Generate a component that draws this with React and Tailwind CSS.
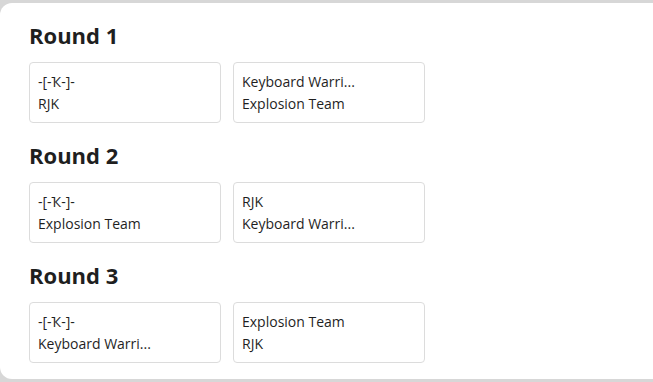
const rounds = [
  { name: "Round 1", matches: [["-[-Ҡ-]-", "RJK"], ["Keyboard Warri...", "Explosion Team"]] },
  { name: "Round 2", matches: [["-[-Ҡ-]-", "Explosion Team"], ["RJK", "Keyboard Warri..."]] },
  { name: "Round 3", matches: [["-[-Ҡ-]-", "Keyboard Warri..."], ["Explosion Team", "RJK"]] },
];

function MatchCard({ teams }) {
  return (
    <div className="w-[192px] rounded-[4px] border border-[#dcdcdc] bg-white px-[8px] pt-[8px] pb-[7px] text-[14px] leading-[22px] text-[#1f1f1f]">
      {teams.map((t, i) => (
        <div key={i} className="truncate">{t}</div>
      ))}
    </div>
  );
}

export default function App() {
  return (
    <div
      className="h-[382px] w-[653px] overflow-hidden bg-[#d7d7d7] pt-[3px] pb-[3px]"
      style={{ fontFamily: '"Open Sans", "Liberation Sans", sans-serif' }}
    >
      <div className="flex h-full w-[680px] flex-col gap-[16px] rounded-l-[12px] bg-white pl-[29px] pt-[16px]">
        {rounds.map((r) => (
          <section key={r.name}>
            <h2 className="mb-[11px] text-[22px] font-bold leading-[32px] text-[#1f1f1f]">{r.name}</h2>
            <div className="flex gap-[12px]">
              {r.matches.map((m, i) => (
                <MatchCard key={i} teams={m} />
              ))}
            </div>
          </section>
        ))}
      </div>
    </div>
  );
}
